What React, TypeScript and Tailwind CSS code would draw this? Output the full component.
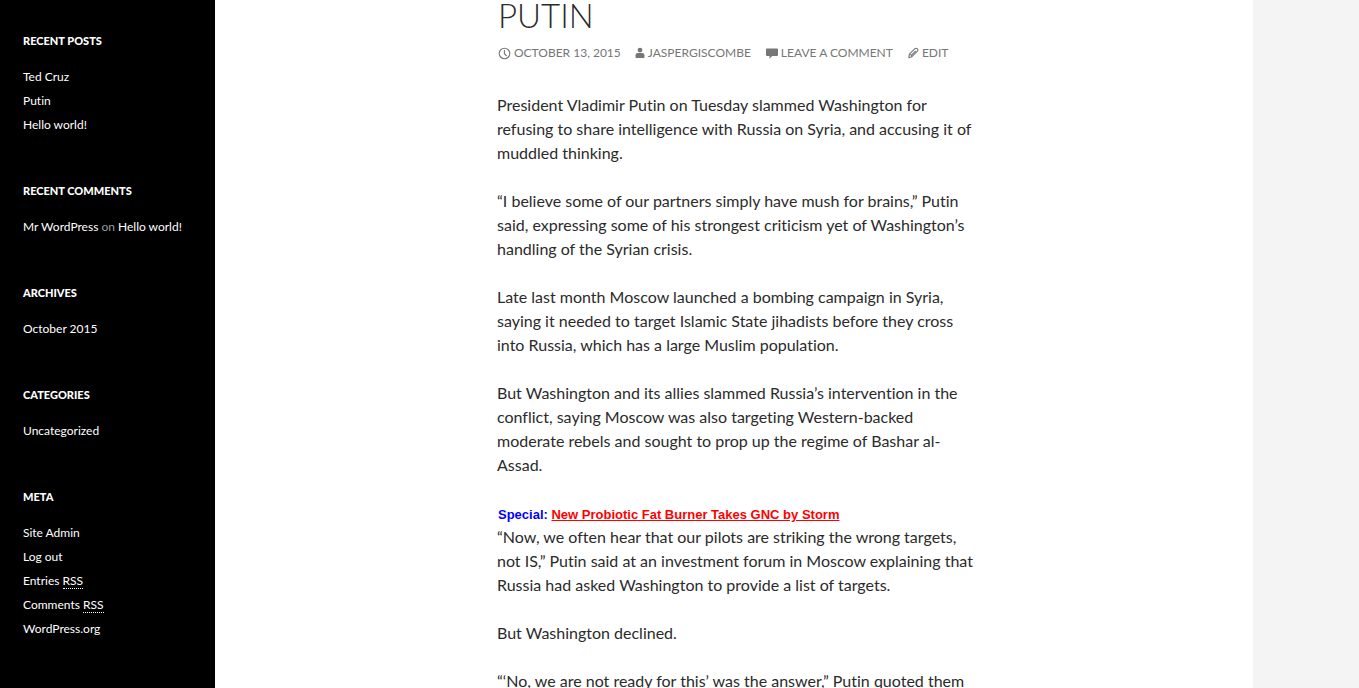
import type { ReactNode } from "react";

function Widget({ title, children }: { title: string; children: ReactNode }) {
  return (
    <section>
      <h2 className="mb-[15px] text-[11px] leading-[18px] font-black text-white uppercase">{title}</h2>
      <ul className="text-xs leading-6 font-normal text-white/60">{children}</ul>
    </section>
  );
}

function SideLink({ children }: { children: ReactNode }) {
  return (
    <a href="#" className="text-white hover:text-[#41a62a]">
      {children}
    </a>
  );
}

function Rss() {
  return (
    <abbr title="Really Simple Syndication" className="inline-block border-b border-dotted border-white leading-[15px] no-underline">
      RSS
    </abbr>
  );
}

function ClockIcon() {
  return (
    <svg className="size-[13px] shrink-0" viewBox="0 0 13 13" fill="none" stroke="currentColor" aria-hidden="true">
      <circle cx="6.500" cy="6.500" r="5.300" strokeWidth="1.1" />
      <path d="M6.400 3v3.700l2.200 2.300" strokeWidth="1.1" />
    </svg>
  );
}

function UserIcon() {
  return (
    <svg className="h-3 w-[10px] shrink-0" viewBox="0 0 10 12" fill="currentColor" aria-hidden="true">
      <circle cx="5" cy="3.100" r="2.400" />
      <path d="M.6 11V8.200c0-1.300.9-2.200 2.200-2.200h4.400c1.300 0 2.200.9 2.200 2.200V11z" />
    </svg>
  );
}

function CommentIcon() {
  return (
    <svg className="size-[13px] shrink-0" viewBox="0 0 13 13" fill="currentColor" aria-hidden="true">
      <path d="M2.200 1.500h9.600c.7 0 1.200.5 1.200 1.200v5c0 .7-.5 1.300-1.200 1.300H7.200L4.500 11.800V9H2.200C1.500 9 1 8.400 1 7.700v-5c0-.7.500-1.200 1.200-1.200z" />
    </svg>
  );
}

function PencilIcon() {
  return (
    <svg className="size-3 shrink-0" viewBox="0 0 12 12" fill="none" stroke="currentColor" strokeLinejoin="round" aria-hidden="true">
      <path d="M1.800 10.700l.6-3.500 5.300-5.300c.8-.8 1.900-.8 2.600-.1s.7 1.800-.1 2.600L4.900 9.700zM4 8.600l4.800-4.800M2.500 7.200c1.300.2 2.200 1.100 2.400 2.400" strokeWidth="1.100" />
    </svg>
  );
}

function Meta({ icon, children }: { icon: ReactNode; children: ReactNode }) {
  return (
    <a href="#" className="flex items-center gap-[3px] hover:text-[#41a62a]">
      {icon}
      {children}
    </a>
  );
}

export default function App() {
  return (
    <div className="h-screen overflow-hidden bg-[#f4f4f4] font-['Lato',sans-serif] [font-variant-ligatures:none]">
      <div className="flex min-h-full max-w-[1253px] bg-white">
        <aside className="flex w-[215px] shrink-0 flex-col gap-[45px] bg-black pt-8 pl-[23px]">
          <Widget title="Recent Posts">
            <li><SideLink>Ted Cruz</SideLink></li>
            <li><SideLink>Putin</SideLink></li>
            <li><SideLink>Hello world!</SideLink></li>
          </Widget>
          <Widget title="Recent Comments">
            <li><SideLink>Mr WordPress</SideLink> on <SideLink>Hello world!</SideLink></li>
          </Widget>
          <Widget title="Archives">
            <li><SideLink>October 2015</SideLink></li>
          </Widget>
          <Widget title="Categories">
            <li><SideLink>Uncategorized</SideLink></li>
          </Widget>
          <Widget title="Meta">
            <li><SideLink>Site Admin</SideLink></li>
            <li><SideLink>Log out</SideLink></li>
            <li><SideLink>Entries <Rss /></SideLink></li>
            <li><SideLink>Comments <Rss /></SideLink></li>
            <li><SideLink>WordPress.org</SideLink></li>
          </Widget>
        </aside>
        <main className="min-w-0 flex-1 pl-[6px]">
          <article className="mx-auto max-w-[480px] text-base leading-6 text-[#2b2b2b]">
            <h1 className="pl-px text-[33px] leading-[30px] font-light uppercase">Putin</h1>
            <div className="mt-[13px] mb-[30px] flex items-center gap-[14px] pl-px text-xs leading-5 whitespace-nowrap text-[#767676] uppercase">
              <Meta icon={<ClockIcon />}><time dateTime="2015-10-13">October 13, 2015</time></Meta>
              <Meta icon={<UserIcon />}>jaspergiscombe</Meta>
              <Meta icon={<CommentIcon />}>Leave a comment</Meta>
              <Meta icon={<PencilIcon />}>Edit</Meta>
            </div>
            <div className="flex flex-col gap-6">
              <p>President Vladimir Putin on Tuesday slammed Washington for refusing to share intelligence with Russia on Syria, and accusing it of muddled thinking.</p>
              <p>“I believe some of our partners simply have mush for brains,” Putin said, expressing some of his strongest criticism yet of Washington’s handling of the Syrian crisis.</p>
              <p>Late last month Moscow launched a bombing campaign in Syria, saying it needed to target Islamic State jihadists before they cross into Russia, which has a large Muslim population.</p>
              <p>But Washington and its allies slammed Russia’s intervention in the conflict, saying Moscow was also targeting Western-backed moderate rebels and sought to prop up the regime of Bashar al-Assad.</p>
              <div>
                <p className="pt-1 pl-px font-['Liberation_Sans',Arial,sans-serif] text-[13px] leading-5 font-bold text-[#0000ff]">
                  Special: <a href="#" className="text-[#ff0000] underline">New Probiotic Fat Burner Takes GNC by Storm</a>
                </p>
                <p>“Now, we often hear that our pilots are striking the wrong targets, not IS,” Putin said at an investment forum in Moscow explaining that Russia had asked Washington to provide a list of targets.</p>
              </div>
              <p>But Washington declined.</p>
              <p>“‘No, we are not ready for this’ was the answer,” Putin quoted them</p>
            </div>
          </article>
        </main>
      </div>
    </div>
  );
}
